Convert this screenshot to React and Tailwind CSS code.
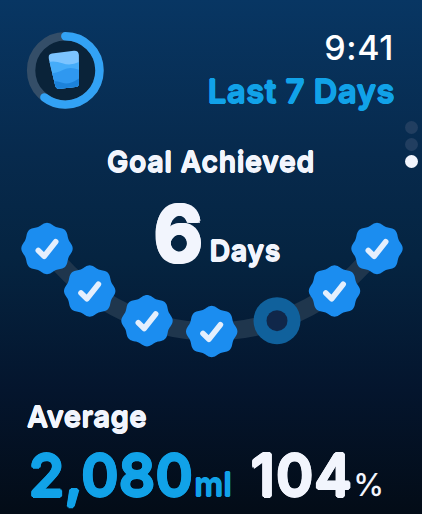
import React from 'react';

const days = [
    { x: 47, y: 28.5, done: true },
    { x: 89.7, y: 71, done: true },
    { x: 147, y: 100.7, done: true },
    { x: 211.7, y: 111.5, done: true },
    { x: 277, y: 100.7, done: false },
    { x: 334.5, y: 71, done: true },
    { x: 377, y: 28.5, done: true },
];

// Thickens the glyphs evenly in every direction, which rounds off their corners
const rounded = "[text-shadow:0.03em_0_currentColor,-0.03em_0_currentColor,0_0.03em_currentColor,0_-0.03em_currentColor,0.021em_0.021em_currentColor,-0.021em_0.021em_currentColor,0.021em_-0.021em_currentColor,-0.021em_-0.021em_currentColor]";
const roundedSmall = "[text-shadow:0.02em_0_currentColor,-0.02em_0_currentColor,0_0.02em_currentColor,0_-0.02em_currentColor]";

// Eight-lobed badge outline around the origin
const badgePath = Array.from({ length: 144 }, (_, i) => {
    const a = (i / 144) * Math.PI * 2;
    const r = 24.5 + 1.2 * Math.cos(8 * a);
    return `${i ? 'L' : 'M'}${(r * Math.cos(a)).toFixed(2)} ${(r * Math.sin(a)).toFixed(2)}`;
}).join('') + 'Z';

function ProgressRing() {
    return (
        <svg width="80" height="80" viewBox="0 0 80 80" className="block">
            <defs>
                <clipPath id="glass">
                    <path d="M26.6 12.6 L48.5 10 Q53.2 9.7 53.5 14.3 L53.6 42.2 Q53.5 46 50 46.3 L34.5 48 Q30.6 48.3 29.8 44.6 L23.3 17.8 Q22.5 13.2 26.6 12.6Z" />
                </clipPath>
            </defs>
            <circle cx="40.3" cy="40.4" r="34.2" fill="#0a2339" stroke="#344e68" strokeWidth="8.4" />
            <circle
                cx="40.3" cy="40.4" r="34.2" fill="none" stroke="#32a2f5" strokeWidth="8.4" strokeLinecap="round"
                pathLength="100" strokeDasharray="60.5 100" transform="rotate(-90 40.3 40.4)"
            />
            <g transform="translate(0.4 10.8)">
                <g clipPath="url(#glass)">
                    <rect x="20" y="8" width="36" height="42" fill="#7cc4ff" />
                    <path d="M20 22 Q28 19 37 22.5 T56 20 V50 H20Z" fill="#45acf9" />
                    <path d="M20 33 Q31 33 38 29 T56 30 V50 H20Z" fill="#2f98f0" />
                    <path d="M20 41 Q30 39 37 42 T56 36 V50 H20Z" fill="#1c82da" />
                </g>
            </g>
        </svg>
    );
}

function WeekArc() {
    return (
        <svg width="422" height="140" viewBox="0 0 422 140" className="block">
            <path d="M47 28.5 A205.5 205.5 0 0 0 377 28.5" fill="none" stroke="#1f364d" strokeWidth="18" />
            {days.map((day) => (
                <g key={day.x} transform={`translate(${day.x} ${day.y})`}>
                    {day.done ? (
                        <>
                            <path d={badgePath} fill="#1b8df0" />
                            <path d="M-8.7 2 L-2.8 7.8 L8.7 -6.8" fill="none" stroke="#e4effd" strokeWidth="5.6" strokeLinecap="round" strokeLinejoin="round" />
                        </>
                    ) : (
                        <>
                            <circle r="23.5" fill="#10619c" />
                            <circle r="10.5" fill="#10274a" />
                        </>
                    )}
                </g>
            ))}
        </svg>
    );
}

export default function App() {
    return (
        <div className="flex h-[514px] w-[422px] flex-col overflow-hidden bg-[linear-gradient(180deg,#083663_0%,#072a4d_30%,#052441_50%,#04152d_76%,#030c17_100%)] font-[Inter,sans-serif] text-[#f2f5fd]">
            <header className="flex h-[143px] shrink-0 justify-between pl-[25px] pr-[27px] pt-[30px]">
                <ProgressRing />
                <div className="flex flex-col items-end">
                    <span className="pr-px text-[34px] font-medium leading-[36px] tracking-[0.6px] text-white">9:41</span>
                    <span className={`mt-[7px] text-[33px] font-semibold leading-[36px] tracking-[0.4px] text-[#11a2e8] ${roundedSmall}`}>Last 7 Days</span>
                </div>
            </header>

            <section className="relative flex h-[224px] shrink-0 flex-col">
                <h1 className={`pt-[2px] text-center text-[28.5px] font-semibold leading-[34px] tracking-[0.7px] ${roundedSmall}`}>Goal Achieved</h1>
                <div className="grid pt-[6px]">
                    <div className="col-start-1 row-start-1 pt-[35px]">
                        <WeekArc />
                    </div>
                    <div className="col-start-1 row-start-1 flex items-baseline justify-center gap-[7px] pl-[13px]">
                        <span className={`text-[76px] font-semibold leading-[96px] ${rounded}`}>6</span>
                        <span className={`text-[28.5px] font-semibold tracking-[0.6px] ${roundedSmall}`}>Days</span>
                    </div>
                </div>

                {/* Page indicator */}
                <div className="absolute right-[4px] top-[-22px] flex flex-col gap-[4px]">
                    <span className="size-[13px] rounded-full bg-[#213e60]" />
                    <span className="size-[13px] rounded-full bg-[#213e60]" />
                    <span className="size-[13px] rounded-full bg-[#f2f5fd]" />
                </div>
            </section>

            <footer className="pl-[27px] pt-[33px]">
                <h2 className={`text-[29px] font-semibold leading-[34px] tracking-[0.6px] ${roundedSmall}`}>Average</h2>
                <div className="mt-[6px] flex items-baseline pl-[2px] leading-[72px]">
                    <span className={`text-[57px] font-medium tracking-[0.8px] text-[#11a2e8] ${rounded}`}>2,080</span>
                    <span className={`pl-[1px] text-[32px] font-semibold tracking-[0.3px] text-[#11a2e8] ${roundedSmall}`}>ml</span>
                    <span className={`ml-[19px] text-[57px] font-medium tracking-[1.4px] ${rounded}`}>104</span>
                    <span className="text-[31px] font-medium">%</span>
                </div>
            </footer>
        </div>
    );
}
